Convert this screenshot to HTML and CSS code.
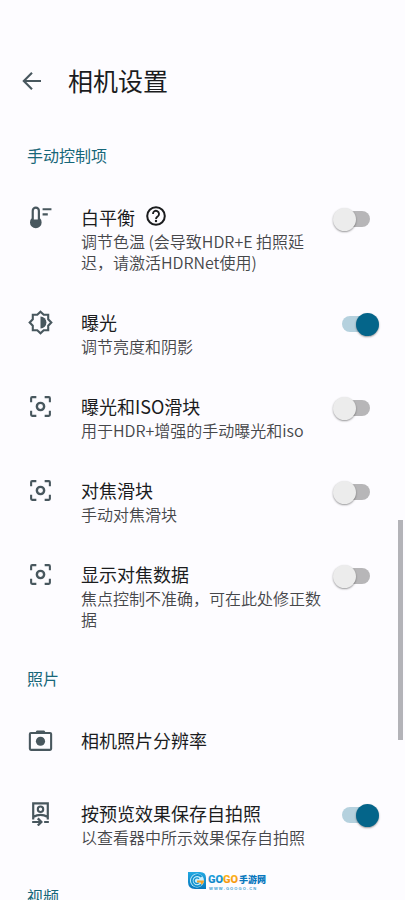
FILE: index.html
```html
<!DOCTYPE html>
<html lang="zh-CN">
<head>
<meta charset="utf-8">
<meta name="viewport" content="width=device-width, initial-scale=1">
<title>相机设置</title>
<link rel="stylesheet" href="styles.css">
</head>
<body>
<svg class="symbols" aria-hidden="true">
  <symbol id="focus" viewBox="0 0 24 24">
    <path d="M3 8V4a1 1 0 0 1 1-1h4M16 3h4a1 1 0 0 1 1 1v4M21 16v4a1 1 0 0 1-1 1h-4M8 21H4a1 1 0 0 1-1-1v-4" fill="none" stroke="currentColor" stroke-width="2"/>
    <circle cx="12" cy="12" r="3.5" fill="none" stroke="currentColor" stroke-width="2.3"/>
  </symbol>
</svg>
<div class="app">
  <header class="bar">
    <button class="back" type="button" aria-label="返回">
      <svg viewBox="0 0 24 24"><path d="M21 12H4M12 3.7 3.8 12l8.2 8.3" fill="none" stroke="currentColor" stroke-width="2.1"/></svg>
    </button>
    <h1>相机设置</h1>
  </header>
  <main>
    <section>
      <h2>手动控制项</h2>
      <div class="row">
        <svg class="icon" viewBox="0 0 24 24"><path fill="currentColor" fill-rule="evenodd" d="M3.5 5.5a4 4 0 0 1 8 0v7.3a5.6 5.6 0 1 1-8 0zM5.6 5.5v8.4h3.8V5.5a1.9 1.9 0 0 0-3.8 0z"/><path d="M14 4.1h8.5M14 9h5" stroke="currentColor" stroke-width="2"/></svg>
        <div class="text">
          <div class="heading"><label for="wb">白平衡</label>
            <button class="help" type="button" aria-label="帮助"><svg viewBox="0 0 24 24"><circle cx="12" cy="12" r="9.6" fill="none" stroke="currentColor" stroke-width="2.2"/><path d="M8.7 9.7a3.3 3.3 0 1 1 5.5 2.4c-1.2 1-2.2 1.5-2.2 3.1" fill="none" stroke="currentColor" stroke-width="2"/><circle cx="12" cy="17.5" r="1.3" fill="currentColor"/></svg></button>
          </div>
          <p>调节色温 (会导致HDR+E 拍照延迟，请激活HDRNet使用)</p>
        </div>
        <input id="wb" class="switch" type="checkbox" role="switch">
      </div>
      <div class="row">
        <svg class="icon" viewBox="0 0 24 24"><path d="M12 1.6 15.1 4.6H19.4V8.9L22.4 12l-3 3.1v4.3h-4.3L12 22.4l-3.1-3H4.6v-4.3L1.6 12l3-3.1V4.6h4.3z" fill="none" stroke="currentColor" stroke-width="2"/><path d="M12 6.3a5.7 5.7 0 0 1 0 11.4z" fill="currentColor"/></svg>
        <div class="text">
          <div class="heading"><label for="exposure">曝光</label></div>
          <p>调节亮度和阴影</p>
        </div>
        <input id="exposure" class="switch" type="checkbox" role="switch" checked>
      </div>
      <div class="row">
        <svg class="icon"><use href="#focus"/></svg>
        <div class="text">
          <div class="heading"><label for="iso">曝光和ISO滑块</label></div>
          <p>用于HDR+增强的手动曝光和iso</p>
        </div>
        <input id="iso" class="switch" type="checkbox" role="switch">
      </div>
      <div class="row">
        <svg class="icon"><use href="#focus"/></svg>
        <div class="text">
          <div class="heading"><label for="slider">对焦滑块</label></div>
          <p>手动对焦滑块</p>
        </div>
        <input id="slider" class="switch" type="checkbox" role="switch">
      </div>
      <div class="row">
        <svg class="icon"><use href="#focus"/></svg>
        <div class="text">
          <div class="heading"><label for="data">显示对焦数据</label></div>
          <p>焦点控制不准确，可在此处修正数据</p>
        </div>
        <input id="data" class="switch" type="checkbox" role="switch">
      </div>
    </section>
    <section>
      <h2>照片</h2>
      <a class="row" href="#resolution">
        <svg class="icon" viewBox="0 0 24 24"><path d="M7.5 4.6 8.6 2.9h6.8l1.1 1.7z" fill="currentColor" stroke="currentColor" stroke-linejoin="round"/><rect x="1.8" y="4.8" width="20.4" height="16.2" rx="1" fill="none" stroke="currentColor" stroke-width="2"/><circle cx="12" cy="12.7" r="4.4" fill="currentColor"/></svg>
        <span class="text"><span class="heading">相机照片分辨率</span></span>
      </a>
      <div class="row">
        <svg class="icon" viewBox="0 0 24 24"><path d="M5 17.8V2.2h14v15.6M5 15.4q7-4.2 14 0" fill="none" stroke="currentColor" stroke-width="2.1"/><circle cx="12" cy="7.9" r="2.6" fill="none" stroke="currentColor" stroke-width="2"/><path d="M4 20.1h8.5M15.5 20.1H20" stroke="currentColor" stroke-width="2"/><path d="M9.4 16.7 12.8 20.1 9.4 23.5" fill="none" stroke="currentColor" stroke-width="2.2"/></svg>
        <div class="text">
          <div class="heading"><label for="mirror">按预览效果保存自拍照</label></div>
          <p>以查看器中所示效果保存自拍照</p>
        </div>
        <input id="mirror" class="switch" type="checkbox" role="switch" checked>
      </div>
    </section>
    <section>
      <h2>视频</h2>
    </section>
  </main>
  <div class="scrollbar"></div>
  <svg class="brand" viewBox="0 0 80 22" role="img" aria-label="GOGO手游网">
    <defs>
      <linearGradient id="blue" x1="0" y1="0" x2="0" y2="1"><stop offset="0" stop-color="#22a9e2"/><stop offset="1" stop-color="#0877bd"/></linearGradient>
      <linearGradient id="gold" x1="0" y1="0" x2="0" y2="1"><stop offset="0" stop-color="#fdbb22"/><stop offset="1" stop-color="#f28a08"/></linearGradient>
    </defs>
    <path d="M1 2h12q6 0 6 6v11H8q-7 0-7-7z" fill="url(#blue)"/>
    <circle cx="10" cy="10.6" r="7" fill="#c9eefb"/>
    <path d="M14.5 6.8A5.6 5.6 0 1 0 14.5 14.4" fill="none" stroke="#1593cf" stroke-width="1.8"/>
    <path d="M12 8.8a2.8 2.8 0 1 0 0 3.8" fill="none" stroke="#1593cf" stroke-width="1.4"/>
    <path d="M10 10.5h7.2q-.3 3.2-2.8 4.3l-.7-2.4H10z" fill="#f3a126"/>
    <text class="brand-name" x="21" y="13" fill="url(#blue)">GO</text>
    <text class="brand-name" x="36" y="13" fill="url(#gold)">GO</text>
    <text class="brand-cn" x="52" y="13" fill="#0877bd">手游网</text>
    <text class="brand-url" x="22" y="20" fill="#3c9fd3">W W W . G O O G O . C N</text>
  </svg>
</div>
</body>
</html>
```
FILE: styles.css
```css
* { box-sizing: border-box; }
body {
  margin: 0;
  background: #fdfcff;
  color: #1b1c1e;
  font-family: "Noto Sans CJK SC", sans-serif;
}
.symbols { position: absolute; width: 0; height: 0; }
.app {
  position: relative;
  display: flex;
  flex-direction: column;
  height: 100vh;
  overflow: hidden;
}
.bar {
  display: flex;
  align-items: center;
  flex: none;
  gap: 24px;
  padding: 67px 20px 31px;
}
button { padding: 0; border: 0; background: none; }
button svg { display: block; width: 100%; height: 100%; }
.back { width: 24px; height: 24px; color: #48575e; }
h1 { margin: 0; font-size: 25px; font-weight: 400; line-height: 27px; }
main { flex: 1; min-height: 0; overflow-y: auto; scrollbar-width: none; }
h2 {
  margin: 0;
  padding: 20px 27px;
  color: #176779;
  font-size: 16px;
  font-weight: 400;
  line-height: 21px;
}
.row {
  display: flex;
  align-items: flex-start;
  min-height: 73px;
  padding: 19px 26px 18px 28px;
  color: inherit;
  text-decoration: none;
}
.icon { flex: none; width: 25px; height: 25px; margin-right: 28px; color: #48575e; }
.text { flex: 1; min-width: 0; }
.heading {
  display: flex;
  align-items: center;
  gap: 10px;
  font-size: 18px;
  line-height: 24px;
}
.help { width: 22px; height: 22px; margin: -2px 0 0; color: #1b1c1e; }
p {
  margin: 2px 0 0;
  padding-right: 8px;
  color: #46474a;
  font-size: 16px;
  font-weight: 350;
  line-height: 21px;
}
.switch {
  appearance: none;
  display: grid;
  flex: none;
  align-items: center;
  width: 46px;
  height: 24px;
  margin: 2px 0 0;
}
.switch::before, .switch::after { content: ""; grid-area: 1 / 1; }
.switch::before {
  justify-self: center;
  width: 28px;
  height: 16px;
  border-radius: 8px;
  background: #b7b6b8;
}
.switch::after {
  width: 23px;
  height: 23px;
  border-radius: 50%;
  background: #ececec;
  box-shadow: 0 1px 2px #0006;
}
.switch:checked::before { background: #b5d1de; }
.switch:checked::after { justify-self: end; background: #04658a; }
.scrollbar {
  position: absolute;
  top: 520px;
  right: 2px;
  width: 5px;
  height: 220px;
  background: #b3b3b8;
}
.brand {
  position: absolute;
  bottom: 8px;
  left: 187px;
  width: 80px;
  height: 22px;
}
.brand-name { font: 900 11px Roboto, sans-serif; }
.brand-cn { font-size: 9px; font-weight: 900; }
.brand-url { font: 700 4px "Liberation Sans", sans-serif; }
```
